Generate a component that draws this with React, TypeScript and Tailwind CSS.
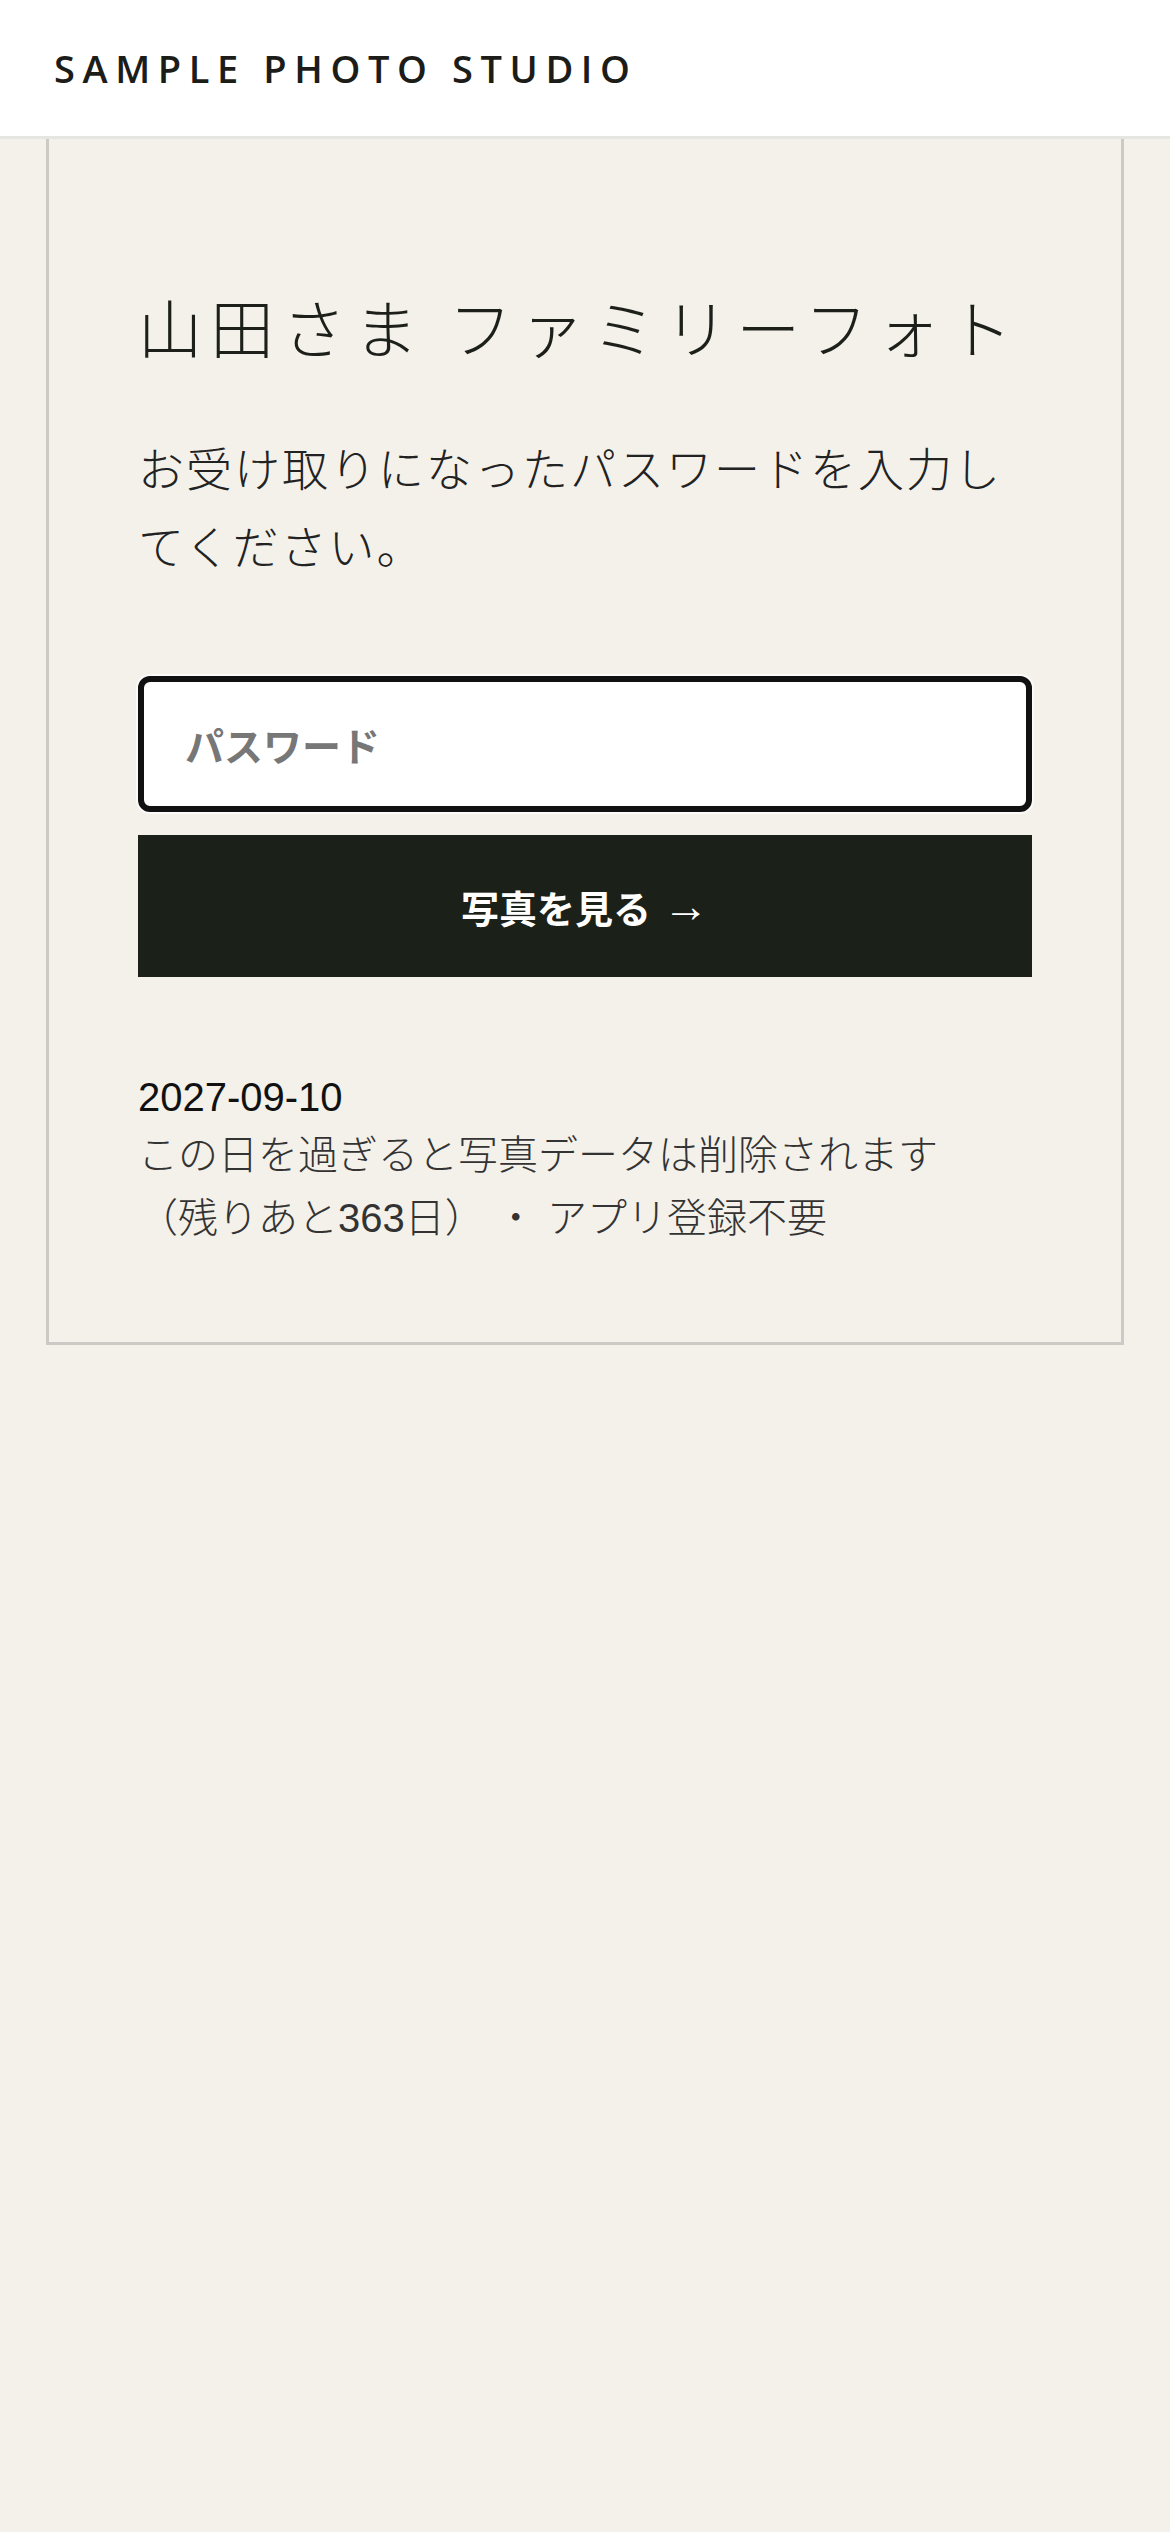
import { useState } from "react";

const JP = {
  fontFamily: '"Noto Sans CJK JP", "Noto Sans", sans-serif',
};

export default function App() {
  const [password, setPassword] = useState("");

  return (
    <div className="min-h-screen bg-[#f3f1ea]" style={JP}>
      <header className="flex h-[139px] items-center border-b-[3px] border-[#e5e5e2] bg-white px-[54px]">
        <span
          className="text-[38px] font-semibold tracking-[0.2em] text-[#1c1c18]"
          style={{ fontFamily: '"Open Sans", "Liberation Sans", sans-serif' }}
        >
          SAMPLE PHOTO STUDIO
        </span>
      </header>

      <main className="mx-[46px] border-[3px] border-t-0 border-[#cbcac6] px-[89px] pb-[92px] pt-[138px]">
        <h1 className="text-[64px] font-light leading-[1.5] tracking-[8px] text-[#1d1f1a]">
          山田さま ファミリーフォト
        </h1>

        <p className="mt-[54px] text-[46px] font-light leading-[78px] tracking-[2px] text-[#222]">
          お受け取りになったパスワードを入力してください。
        </p>

        <form
          className="mt-[93px] flex flex-col gap-[23px]"
          onSubmit={(e) => e.preventDefault()}
        >
          <input
            type="password"
            value={password}
            onChange={(e) => setPassword(e.target.value)}
            placeholder="パスワード"
            className="h-[136px] w-full rounded-[12px] border-[6px] border-[#111] bg-white px-[41px] text-[39px] font-bold text-[#111] shadow-[0_0_0_2px_rgba(255,255,255,0.7)] outline-none placeholder:text-[#777]"
          />
          <button
            type="submit"
            className="flex h-[142px] w-full items-center justify-center bg-[#1b2019] text-[38px] font-bold text-white"
          >
            写真を見る
            <span
              className="ml-[12px] text-[46px] font-normal"
              style={{ fontFamily: '"Liberation Sans", sans-serif' }}
            >
              →
            </span>
          </button>
        </form>

        <div
          className="mt-[94px] text-[40px] leading-[63px] text-[#333]"
          style={{
            fontFamily: '"Liberation Sans", "Noto Sans CJK JP", sans-serif',
          }}
        >
          <div className="leading-[53px] text-[#111]">2027-09-10</div>
          <div className="font-light">
            この日を過ぎると写真データは削除されます
            <br />
            （残りあと363日） ・ アプリ登録不要
          </div>
        </div>
      </main>
    </div>
  );
}
